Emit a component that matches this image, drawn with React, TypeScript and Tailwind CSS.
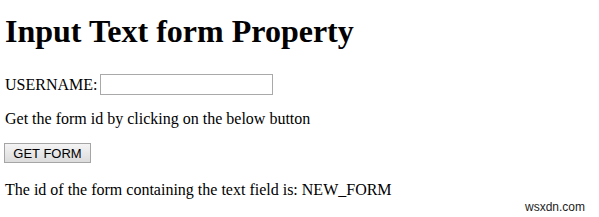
import React from "react";

export default function App() {
  return (
    <div
      className="relative w-[599px] h-[217px] overflow-hidden bg-white text-black pl-[5px]"
      style={{ fontFamily: '"Liberation Serif", "Times New Roman", serif' }}
    >
      <h1 className="mt-[13px] text-[32px] font-bold leading-[37px]">Input Text form Property</h1>
      <div className="mt-[24px] flex h-[21px] items-center text-[16px] leading-[18px]">
        <span>USERNAME:</span>
        <input
          type="text"
          className="ml-[3px] h-[21px] w-[173px] border border-[#a9a9a9] bg-white px-[2px] outline-none"
        />
      </div>
      <p className="mt-[15px] text-[16px] leading-[18px]">Get the form id by clicking on the below button</p>
      <button
        className="-ml-[1px] mt-[15px] flex h-[20px] w-[87px] items-center justify-center border border-[#a5a5a5] bg-gradient-to-b from-[#f4f4f4] to-[#dcdcdc] text-[13px] leading-none text-black"
        style={{ fontFamily: '"Liberation Sans", Arial, sans-serif' }}
      >
        GET FORM
      </button>
      <p className="mt-[18px] text-[16px] leading-[18px]">
        The id of the form containing the text field is: NEW_FORM
      </p>
      <div
        className="absolute left-[525px] top-[200px] text-[12px] leading-[14px] text-[#222]"
        style={{ fontFamily: '"Liberation Sans", Arial, sans-serif' }}
      >
        wsxdn.com
      </div>
    </div>
  );
}
